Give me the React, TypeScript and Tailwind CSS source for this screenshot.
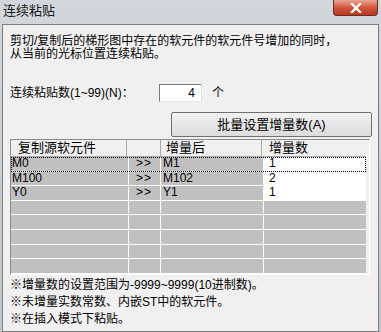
const rows = [
  { src: "M0", dst: "M1", inc: "1" },
  { src: "M100", dst: "M102", inc: "2" },
  { src: "Y0", dst: "Y1", inc: "1" },
  null,
  null,
  null,
  null,
  null,
];

const font = "font-['Liberation_Sans','Noto_Sans_CJK_SC',sans-serif]";

export default function App() {
  return (
    <div
      className={`flex h-[332px] w-[381px] flex-col overflow-hidden bg-gradient-to-b from-[#d3d7db] to-[#c0c5ca] text-[12px] text-black ${font}`}
    >
      {/* title bar */}
      <div className="flex h-[24px] shrink-0 items-start justify-between">
        <span className="pl-[3px] pt-[3px] text-[13px] leading-[16px] text-[#1a1a1a]">
          连续粘贴
        </span>
        <div className="mr-[3px] flex h-[16px] w-[45px] items-center justify-center rounded-b-[4px] border border-t-0 border-[#6b2a22] bg-gradient-to-b from-[#e8a493] via-[#d2553d] to-[#b8361f]">
          <svg width="12" height="10" viewBox="0 0 12 10">
            <path d="M2 1 L10 9 M10 1 L2 9" stroke="#ffffff" strokeWidth="2.4" strokeLinecap="square" />
          </svg>
        </div>
      </div>

      {/* client area */}
      <div className="mx-[2px] flex flex-1 flex-col border border-[#7d7d7d] bg-[#f0f0f0] pl-[7px] pr-[6px]">
        <div className="pt-[10px] leading-[13px]">
          <div>剪切/复制后的梯形图中存在的软元件的软元件号增加的同时，</div>
          <div>从当前的光标位置连续粘贴。</div>
        </div>

        <div className="mt-[23px] flex h-[18px] items-center">
          <span className="w-[149px]">连续粘贴数(1~99)(N)：</span>
          <div className="flex h-[18px] w-[43px] items-center justify-end border border-[#7a7a7a] border-r-[#e3e3e3] border-b-[#e3e3e3] bg-white pr-[6px]">
            4
          </div>
          <span className="ml-[10px]">个</span>
        </div>

        <div className="mt-[10px] flex justify-end">
          <div className="flex h-[25px] w-[201px] items-center justify-center rounded-[2px] border border-[#707070] bg-gradient-to-b from-[#f2f2f2] to-[#dcdcdc] text-[13px]">
            批量设置增量数(A)
          </div>
        </div>

        {/* grid */}
        <div className="mt-[2px] w-[360px] border border-[#8a8a8a] border-r-[#ffffff] border-b-[#ffffff] bg-[#f0f0f0] pr-[3px]">
          <div className="grid h-[17px] grid-cols-[116px_34px_101px_1fr] border-b border-[#a8a8a8] text-[13px] leading-[16px]">
            <div className="border-r border-[#a8a8a8] pl-[7px]">复制源软元件</div>
            <div className="border-r border-[#a8a8a8]" />
            <div className="border-r border-[#a8a8a8] pl-[5px]">增量后</div>
            <div className="pl-[7px]">增量数</div>
          </div>
          <div className="bg-[#c0c0c0]">
            {rows.map((r, i) => (
              <div
                key={i}
                className={`grid h-[14.6px] grid-cols-[118px_32px_103px_1fr] border-b border-white text-[12px] leading-[13px] ${
                  i === 0 ? "outline outline-1 -outline-offset-1 outline-dotted outline-black" : ""
                }`}
              >
                <div className="border-r border-white pl-[1px]">{r?.src}</div>
                <div className="border-r border-white pl-[7px] tracking-[1px]">{r ? ">>" : ""}</div>
                <div className="border-r border-white pl-[2px]">{r?.dst}</div>
                <div className={`pl-[5px] ${r ? "bg-white" : ""}`}>{r?.inc}</div>
              </div>
            ))}
          </div>
        </div>

        <div className="mt-[2px] leading-[17px]">
          <div>※增量数的设置范围为-9999~9999(10进制数)。</div>
          <div>※未增量实数常数、内嵌ST中的软元件。</div>
          <div>※在插入模式下粘贴。</div>
        </div>
      </div>
    </div>
  );
}
